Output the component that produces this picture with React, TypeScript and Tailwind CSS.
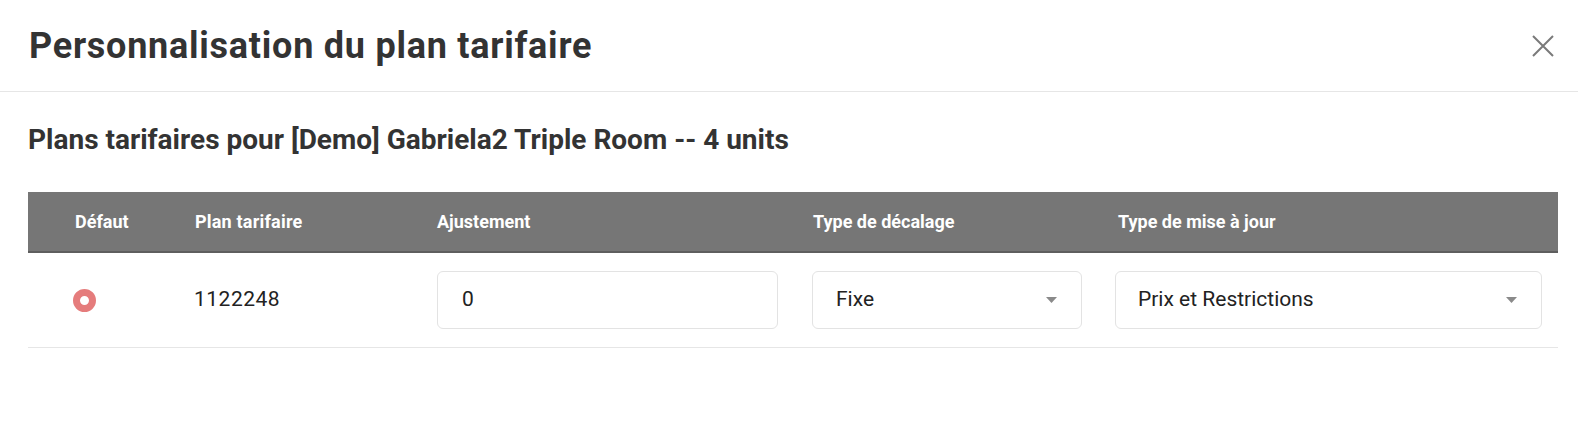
import React from "react";

function Caret() {
  return (
    <svg width="11" height="6" viewBox="0 0 11 6" className="shrink-0">
      <path d="M0 0 L11 0 L5.5 6 Z" fill="#8a8a8a" />
    </svg>
  );
}

export default function App() {
  return (
    <div className="w-[1578px] h-[434px] bg-white font-['Roboto',sans-serif] text-[#222]">
      <div className="h-[92px] border-b border-[#e6e6e6] flex items-center justify-between pl-[29px] pr-[23px]">
        <h1 className="text-[36px] leading-[40px] font-bold text-[#333] tracking-[0.75px]">
          Personnalisation du plan tarifaire
        </h1>
        <button className="w-[24px] h-[24px] flex items-center justify-center" aria-label="Fermer">
          <svg width="22" height="22" viewBox="0 0 22 22">
            <path d="M1 1 L21 21 M21 1 L1 21" stroke="#7a7a7a" strokeWidth="2" />
          </svg>
        </button>
      </div>
      <div className="pl-[28px] pr-[20px]">
        <h2 className="mt-[32px] text-[28px] leading-[32px] font-bold text-[#333]">
          Plans tarifaires pour [Demo] Gabriela2 Triple Room -- 4 units
        </h2>
        <div className="mt-[36px]">
          <div className="grid grid-cols-[152px_242px_375px_303px_1fr] h-[61px] items-center bg-[#767676] border-b-2 border-[#5e5e5e] text-white font-bold text-[18px]">
            <div className="pl-[47px]">Défaut</div>
            <div className="pl-[15px] tracking-[0.2px]">Plan tarifaire</div>
            <div className="pl-[15px]">Ajustement</div>
            <div className="pl-[16px]">Type de décalage</div>
            <div className="pl-[18px]">Type de mise à jour</div>
          </div>
          <div className="grid grid-cols-[152px_242px_375px_303px_1fr] h-[95px] items-center border-b border-[#e6e6e6] text-[21px]">
            <div className="pl-[45px]">
              <div className="w-[23px] h-[23px] rounded-full border-[7px] border-[#e57c7c]" />
            </div>
            <div className="pl-[14px] tracking-[0.5px]">1122248</div>
            <div className="pl-[15px]">
              <div className="w-[341px] h-[58px] border border-[#e3e3e3] rounded-[6px] flex items-center pl-[24px]">
                0
              </div>
            </div>
            <div className="pl-[15px]">
              <div className="w-[270px] h-[58px] border border-[#e3e3e3] rounded-[6px] flex items-center justify-between pl-[23px] pr-[24px]">
                <span>Fixe</span>
                <Caret />
              </div>
            </div>
            <div className="pl-[15px]">
              <div className="w-[427px] h-[58px] border border-[#e3e3e3] rounded-[6px] flex items-center justify-between pl-[22px] pr-[24px]">
                <span>Prix et Restrictions</span>
                <Caret />
              </div>
            </div>
          </div>
        </div>
      </div>
    </div>
  );
}
